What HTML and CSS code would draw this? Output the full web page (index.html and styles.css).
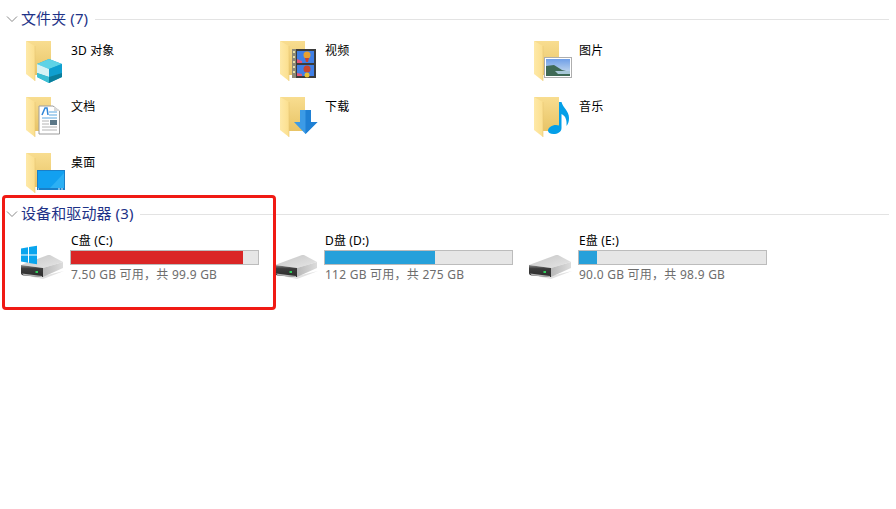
FILE: index.html
```html
<!DOCTYPE html>
<html lang="zh-CN">
<head>
<meta charset="utf-8">
<title>此电脑</title>
<link rel="stylesheet" href="styles.css">
</head>
<body>
<svg class="defs" width="0" height="0" aria-hidden="true">
  <defs>
    <linearGradient id="back" x1="0" y1="0" x2="0" y2="1"><stop offset="0" stop-color="#f8dd90"/><stop offset="1" stop-color="#e8c466"/></linearGradient>
    <linearGradient id="front" x1="0" y1="0" x2="1" y2="0"><stop offset="0" stop-color="#fee9a8"/><stop offset="1" stop-color="#fbdf8e"/></linearGradient>
    <linearGradient id="hdd" x1="0" y1="0" x2="1" y2="1"><stop offset="0" stop-color="#c6c6c6"/><stop offset="1" stop-color="#e6e6e6"/></linearGradient>
    <linearGradient id="hddside" x1="0" y1="0" x2="1" y2="0"><stop offset="0" stop-color="#b8b8b8"/><stop offset="1" stop-color="#dcdcdc"/></linearGradient>
    <linearGradient id="hddfront" x1="0" y1="0" x2="0" y2="1"><stop offset="0" stop-color="#8c8c8c"/><stop offset=".3" stop-color="#3c3c3c"/><stop offset="1" stop-color="#2c2c2c"/></linearGradient>
    <linearGradient id="sky" x1="0" y1="0" x2="0" y2="1"><stop offset="0" stop-color="#6f9fe8"/><stop offset="1" stop-color="#d5e4ee"/></linearGradient>
    <symbol id="folder" viewBox="0 0 48 48">
      <path d="M6 4H31V38H15Z" fill="url(#back)"/>
      <path d="M6 4L15 9V44L6 37Z" fill="url(#front)"/>
      <path d="M15 9V44" stroke="#e8c873" stroke-width=".6"/>
    </symbol>
    <symbol id="drive" viewBox="0 0 48 48">
      <path d="M3 37L23 41L44 33L23 38Z" fill="#e2e2e2"/>
      <path d="M1 27L28 17H30L43 24L23 30Z" fill="url(#hdd)"/>
      <path d="M23 30L43 24V30L23 39Z" fill="url(#hddside)"/>
      <path d="M1 27L23 30V39L4 37.500Q1 37 1 35Z" fill="url(#hddfront)"/>
      <path d="M2 35.500L22 38V39L4 37.500Z" fill="#b4b4b4"/>
      <rect x="15.500" y="33" width="2.500" height="2" fill="#2fd05a"/>
    </symbol>
  </defs>
</svg>

<main class="page">
  <section>
    <h2 class="group-head">
      <svg class="chevron" viewBox="0 0 12 8"><path d="M1 1.500L6 6.500L11 1.500"/></svg>
      <span class="group-title">文件夹 (7)</span>
      <i class="rule"></i>
    </h2>
    <div class="folder-grid">
      <div class="tile">
        <svg class="icon" viewBox="0 0 48 48">
          <use href="#folder"/>
          <path d="M29 22L42 27V40L29 46L17 40V27Z" fill="#1ea7cc"/>
          <path d="M29 22L42 27L29 32L17 27Z" fill="#5fd3e6"/>
          <path d="M17 27L29 32V40L17 36Z" fill="#d5f3f5"/>
          <path d="M29 32L42 27V36L29 40Z" fill="#0f9fd0"/>
          <path d="M17 36L29 40V46L17 40Z" fill="#3cc0d4"/>
          <path d="M29 40L42 36V40L29 46Z" fill="#0a7e9c"/>
        </svg>
        <span class="name">3D 对象</span>
      </div>
      <div class="tile">
        <svg class="icon" viewBox="0 0 48 48">
          <use href="#folder"/>
          <rect x="18" y="12" width="24" height="29" fill="#3b3b3b"/>
          <rect x="18" y="12" width="4" height="29" fill="#8d8a78"/>
          <path d="M19 14h2v2h-2zM19 19h2v2h-2zM19 24h2v2h-2zM19 29h2v2h-2zM19 34h2v2h-2z" fill="#e6dfa6"/>
          <rect x="23" y="14" width="17" height="12" fill="#3f7fe6"/>
          <rect x="23" y="28" width="17" height="11" fill="#3f7fe6"/>
          <path d="M23 22L28 24V26H23ZM23 36L28 37V39H23Z" fill="#e2567a"/>
          <circle cx="33" cy="18" r="3.500" fill="#e9a030"/>
          <path d="M31 21H35L34 25H32Z" fill="#c9452d"/>
          <circle cx="33" cy="32" r="3.500" fill="#c9452d"/>
          <circle cx="33" cy="38" r="2.500" fill="#e9c030"/>
        </svg>
        <span class="name">视频</span>
      </div>
      <div class="tile">
        <svg class="icon" viewBox="0 0 48 48">
          <use href="#folder"/>
          <rect x="16.500" y="20.500" width="27" height="20" fill="#fff" stroke="#aeaeae"/>
          <rect x="18" y="22" width="24" height="17" fill="url(#sky)"/>
          <path d="M18 29L26 28L34 33L42 35V39H18Z" fill="#3f6a56"/>
          <path d="M27 34H42V37H30Z" fill="#a8c8d8"/>
        </svg>
        <span class="name">图片</span>
      </div>
      <div class="tile">
        <svg class="icon" viewBox="0 0 48 48">
          <use href="#folder"/>
          <path d="M33 13L39.500 18V41H19V13Z" fill="#fff" stroke="#9c9c9c"/>
          <path d="M34 13V18H40Z" fill="#d8d8d8"/>
          <path d="M22 22L25 15H27L28 22" fill="none" stroke="#2f86d8" stroke-width="1.500"/>
          <path d="M29 19H37M29 22H37" stroke="#5ba7e0"/>
          <path d="M22 25H37" stroke="#5ba7e0"/>
          <path d="M22 28H29M22 31H29M22 34H37M22 37H37" stroke="#b4b4b4"/>
          <rect x="30" y="27" width="7" height="5" fill="#5c7888"/>
        </svg>
        <span class="name">文档</span>
      </div>
      <div class="tile">
        <svg class="icon" viewBox="0 0 48 48">
          <use href="#folder"/>
          <path d="M26 17H37V29H43.500L31.500 41L20 29H26Z" fill="#3c9be6"/>
          <path d="M31.500 17H37V29H43.500L31.500 41Z" fill="#1f80d4"/>
        </svg>
        <span class="name">下载</span>
      </div>
      <div class="tile">
        <svg class="icon" viewBox="0 0 48 48">
          <use href="#folder"/>
          <path d="M31 9H33.500C34.500 14 41 18 41 25C41 29 40 31 38.500 33C39 28 38 23 33.500 21V35C33.500 39 29.500 41 25.500 41C22 41 20 39.500 20 37.500C20 34.500 24 32 28 32C29 32 30 32.200 31 32.600Z" fill="#049fe8"/>
        </svg>
        <span class="name">音乐</span>
      </div>
      <div class="tile">
        <svg class="icon" viewBox="0 0 48 48">
          <use href="#folder"/>
          <rect x="17" y="21" width="28" height="20" fill="#1a7fc8"/>
          <rect x="18" y="22" width="26" height="17" fill="#12a0f0"/>
          <path d="M30 39L44 24V39Z" fill="#2cb0f4"/>
          <path d="M18 40h1M38 40h2M41 40h2" stroke="#e8f4fc"/>
        </svg>
        <span class="name">桌面</span>
      </div>
    </div>
  </section>

  <section class="drives">
    <h2 class="group-head">
      <svg class="chevron" viewBox="0 0 12 8"><path d="M1 1.500L6 6.500L11 1.500"/></svg>
      <span class="group-title">设备和驱动器 (3)</span>
      <i class="rule"></i>
    </h2>
    <div class="drive-grid">
      <div class="drive-tile">
        <svg class="icon" viewBox="0 0 48 48">
          <use href="#drive"/>
          <path d="M1 10.500L8 9.300V16.500H1ZM9 9.100L17 7.800V16.500H9ZM1 17.500H8V24.700L1 23.500ZM9 17.500H17V26.200L9 24.900Z" fill="#0aa5ee"/>
        </svg>
        <div class="drive-info">
          <span class="name">C盘 (C:)</span>
          <div class="meter"><div class="meter-fill full" style="width:92%"></div></div>
          <span class="free">7.50 GB 可用，共 99.9 GB</span>
        </div>
      </div>
      <div class="drive-tile">
        <svg class="icon" viewBox="0 0 48 48"><use href="#drive"/></svg>
        <div class="drive-info">
          <span class="name">D盘 (D:)</span>
          <div class="meter"><div class="meter-fill" style="width:59%"></div></div>
          <span class="free">112 GB 可用，共 275 GB</span>
        </div>
      </div>
      <div class="drive-tile">
        <svg class="icon" viewBox="0 0 48 48"><use href="#drive"/></svg>
        <div class="drive-info">
          <span class="name">E盘 (E:)</span>
          <div class="meter"><div class="meter-fill" style="width:9.500%"></div></div>
          <span class="free">90.0 GB 可用，共 98.9 GB</span>
        </div>
      </div>
    </div>
  </section>

  <div class="callout"></div>
</main>
</body>
</html>
```

FILE: styles.css
```css
* { box-sizing: border-box; }

html, body {
  margin: 0;
  height: 100%;
  background: #fff;
}

body {
  font-family: "Noto Sans", "Noto Sans CJK SC", sans-serif;
  font-size: 12px;
  color: #000;
  overflow: hidden;
}

.defs { position: absolute; }

.page {
  position: relative;
  height: 509px;
  padding: 8px 7px 0 0;
}

.group-head {
  display: flex;
  align-items: center;
  height: 22px;
  margin: 0;
  padding-left: 6px;
  font-size: 15px;
  font-weight: 400;
  color: #1e3287;
  white-space: nowrap;
}

.group-title {
  margin-bottom: 3px;
  letter-spacing: .1px;
}

.chevron {
  width: 12px;
  height: 8px;
  margin-right: 3px;
  flex: none;
}

.chevron path {
  fill: none;
  stroke: #8a8a8a;
  stroke-width: 1;
}

.rule {
  flex: 1;
  height: 1px;
  margin-left: 7px;
  background: #e3e3e3;
}

.folder-grid {
  display: grid;
  grid-template-columns: repeat(3, 254px);
  grid-auto-rows: 56px;
  padding: 3px 0 0 20px;
}

.tile {
  display: flex;
  align-items: flex-start;
  gap: 3px;
  padding-top: 4px;
}

.icon {
  width: 48px;
  height: 48px;
  flex: none;
  overflow: visible;
}

.name {
  display: block;
  line-height: 18px;
  font-size: 12px;
  letter-spacing: .15px;
  color: #000;
}

.tile .name { margin-top: 5px; }

.drives { margin-top: 2px; }

.drive-grid {
  display: grid;
  grid-template-columns: repeat(3, 254px);
  padding: 7px 0 0 20px;
}

.drive-tile {
  display: flex;
  align-items: flex-start;
  gap: 2px;
}

.drive-tile .icon { margin-top: 6px; }

.drive-info {
  display: flex;
  flex-direction: column;
  width: 189px;
}

.drive-info .name,
.free { padding-left: 1px; }

.meter {
  height: 15px;
  border: 1px solid #bcbcbc;
  background: #e6e6e6;
}

.meter-fill {
  height: 100%;
  background: #26a0da;
}

.meter-fill.full { background: #da2626; }

.free {
  display: block;
  margin-top: 1px;
  line-height: 18px;
  font-size: 12px;
  letter-spacing: .25px;
  color: #6d6d6d;
}

.callout {
  position: absolute;
  left: 2px;
  top: 195px;
  width: 274px;
  height: 115px;
  border: 3px solid #f01a14;
  border-radius: 4px;
  pointer-events: none;
}
```
